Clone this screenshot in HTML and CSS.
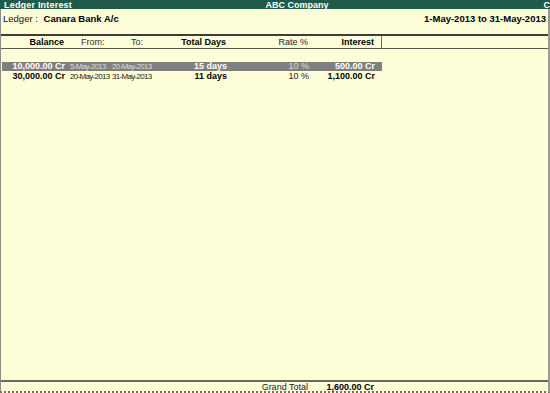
FILE: index.html
```html
<!DOCTYPE html>
<html lang="en">
<head>
    <meta charset="UTF-8">
    <title>Ledger Interest</title>
    <link rel="stylesheet" href="styles.css">
</head>
<body>

    <div class="frame">
        <div class="titlebar">
            <span class="title-left">Ledger Interest</span>
            <span class="title-mid">ABC Company</span>
            <span class="title-right">C</span>
        </div>

        <div class="ledger-line">
            <div>
                <span class="label">Ledger :</span>
                <span class="ledger-name">Canara Bank A/c</span>
            </div>
            <div class="period">1-May-2013 to 31-May-2013</div>
        </div>

        <div class="report">
            <div class="head-wrap">
                <div class="row head">
                    <div class="c-bal bold">Balance</div>
                    <div class="c-from hfrom">From:</div>
                    <div class="c-to hto">To:</div>
                    <div class="c-days bold">Total Days</div>
                    <div class="c-rate">Rate %</div>
                    <div class="c-int bold">Interest</div>
                </div>
            </div>

            <div class="rows">
                <div class="row line selected">
                    <div class="c-bal bold">10,000.00 Cr</div>
                    <div class="c-from date">5-May-2013</div>
                    <div class="c-to date">20-May-2013</div>
                    <div class="c-days bold">15 days</div>
                    <div class="c-rate">10 %</div>
                    <div class="c-int bold">500.00 Cr</div>
                </div>
                <div class="row line">
                    <div class="c-bal bold">30,000.00 Cr</div>
                    <div class="c-from date">20-May-2013</div>
                    <div class="c-to date">31-May-2013</div>
                    <div class="c-days bold">11 days</div>
                    <div class="c-rate">10 %</div>
                    <div class="c-int bold">1,100.00 Cr</div>
                </div>
            </div>
        </div>

        <div class="totals">
            <div class="row">
                <div class="c-bal"></div>
                <div class="c-from"></div>
                <div class="c-to"></div>
                <div class="c-days"></div>
                <div class="c-rate">Grand Total</div>
                <div class="c-int bold">1,600.00 Cr</div>
            </div>
        </div>
    </div>

</body>
</html>
```

FILE: styles.css
```css
* {
    margin: 0;
    padding: 0;
    box-sizing: border-box;
}
html, body {
    width: 550px;
    height: 393px;
    overflow: hidden;
    font-family: "Liberation Sans", Arial, sans-serif;
    font-size: 9px;
    color: #000;
    background-color: #fefed8;
}
.frame {
    height: 393px;
    display: flex;
    flex-direction: column;
    border-left: 1px solid #8c8c8c;
    border-right: 2px solid #9a9a9a;
    border-bottom: 2px dotted #7a6f5a;
}
.bold {
    font-weight: bold;
}

/* title bar */
.titlebar {
    height: 9px;
    background-color: #1f5a4b;
    color: #fff;
    font-weight: bold;
    line-height: 10px;
    display: grid;
    grid-template-columns: 1fr auto 1fr;
    padding-left: 44px;
    margin-left: -1px;
    margin-right: -2px;
    overflow: hidden;
}
.title-left {
    margin-left: -40px;
    letter-spacing: 0.2px;
}
.title-right {
    text-align: right;
}

/* ledger line */
.ledger-line {
    display: flex;
    justify-content: space-between;
    padding: 4px 2px 0 2px;
    height: 25px;
    font-size: 9.5px;
}
.label {
    color: #111;
}
.ledger-name {
    font-weight: bold;
    margin-left: 3px;
}
.period {
    font-weight: bold;
}

/* columns */
.row {
    display: grid;
    grid-template-columns: 65px 42px 42px 78px 82px 66px 6px;
    width: 381px;
    white-space: nowrap;
}
.c-bal, .c-days, .c-rate, .c-int {
    text-align: right;
    padding-right: 2px;
}
.c-from, .c-to {
    padding-left: 3px;
}

/* header */
.report {
    border-top: 2px solid #3c3c3c;
    flex: 1;
}
.head-wrap {
    border-bottom: 1px solid #555;
}
.head {
    height: 12px;
    line-height: 12px;
    border-right: 1px solid #6a6a6a;
}
.hfrom {
    padding-left: 15px;
    color: #333;
}
.hto {
    padding-left: 23px;
    color: #333;
}
.c-rate {
    color: #222;
}
.rows {
    padding-top: 13px;
    padding-left: 1px;
}
.line {
    height: 9px;
    line-height: 9px;
    margin-bottom: 1px;
    width: 380px;
}
.date {
    font-family: "Liberation Sans Narrow", "Liberation Sans", sans-serif;
    font-size: 8px;
    letter-spacing: -0.7px;
    color: #222;
}
.selected {
    background-color: #7f7f7f;
    color: #fff;
}
.selected .date, .selected .c-rate {
    color: #ddd;
}

/* totals */
.totals {
    border-top: 2px solid #6b6b6b;
    height: 11px;
    line-height: 10px;
}
.totals .c-rate {
    color: #222;
}
```
